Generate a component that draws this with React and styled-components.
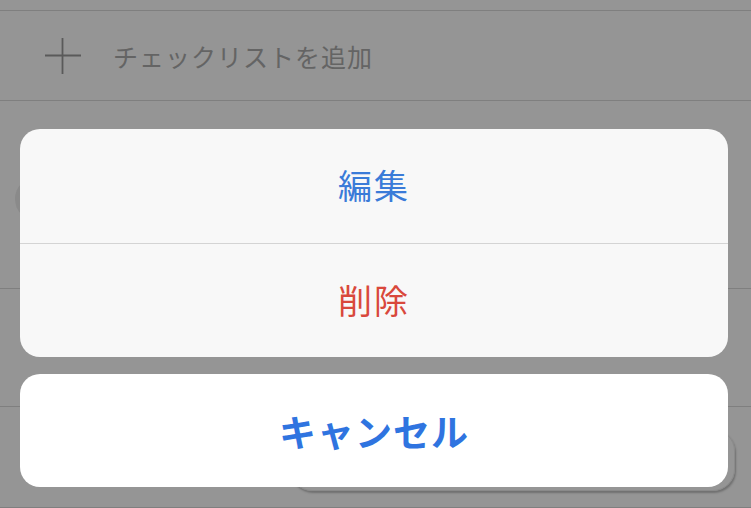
import React from 'react';
import styled, { createGlobalStyle } from 'styled-components';

const GlobalStyle = createGlobalStyle`
	html, body {
		margin: 0;
		padding: 0;
		background: #959595;
	}
	body {
		font-family: "Noto Sans CJK JP", "Noto Sans", sans-serif;
	}
`;

const Screen = styled.div`
	position: relative;
	width: 751px;
	height: 508px;
	overflow: hidden;
	background: #959595;
`;

const Row = styled.div`
	display: flex;
	align-items: center;
	height: ${props => props.height}px;
	border-bottom: 1px solid #7f7f7f;
	box-sizing: border-box;
`;

const AddRow = styled(Row)`
	padding-left: 45px;
	gap: 32px;
	color: #646464;
	font-size: 25px;
	letter-spacing: 1px;
`;

const Check = styled.div`
	width: 44px;
	height: 44px;
	border-radius: 50%;
	margin-left: 15px;
	margin-top: 8px;
	background: #8a8a8a;
`;

const GhostButton = styled.div`
	margin: 22px 16px 0 290px;
	height: 60px;
	flex: 1;
	align-self: flex-start;
	border-radius: 22px;
	box-shadow: 1px 2px 2px rgba(0, 0, 0, 0.25);
	border: 1px solid #8a8a8a;
`;

const Sheet = styled.div`
	position: absolute;
	left: 20px;
	top: 129px;
	width: 708px;
	display: flex;
	flex-direction: column;
	gap: 17px;
`;

const Group = styled.div`
	background: ${props => (props.solid ? '#ffffff' : '#f8f8f8')};
	border-radius: 20px;
	overflow: hidden;
`;

const Action = styled.div`
	height: ${props => props.height}px;
	display: flex;
	align-items: center;
	justify-content: center;
	padding-bottom: ${props => (props.bold ? 0 : 3)}px;
	box-sizing: border-box;
	font-size: ${props => (props.bold ? 37 : 34)}px;
	font-weight: ${props => (props.bold ? 700 : 400)};
	letter-spacing: ${props => (props.bold ? 1 : 2)}px;
	color: ${props => props.color};

	& + & {
		border-top: 1px solid #d4d4d4;
	}
`;

const PlusIcon = () => (
	<svg width="36" height="36" viewBox="0 0 36 36">
		<path d="M17.5 0 V36 M0 17.5 H36" stroke="#5a5a5a" strokeWidth="1.8" fill="none" />
	</svg>
);

const App = () => (
	<Screen>
		<GlobalStyle />
		<Row height={11} />
		<AddRow height={90}>
			<PlusIcon />
			<span>チェックリストを追加</span>
		</AddRow>
		<Row height={188}>
			<Check />
		</Row>
		<Row height={118} />
		<Row height={101}>
			<GhostButton />
		</Row>

		<Sheet>
			<Group>
				<Action height={114} color="#3a7bd8">編集</Action>
				<Action height={114} color="#d9483c">削除</Action>
			</Group>
			<Group solid>
				<Action height={113} color="#2f74e0" bold>
					キャンセル
				</Action>
			</Group>
		</Sheet>
	</Screen>
);

export default App;
